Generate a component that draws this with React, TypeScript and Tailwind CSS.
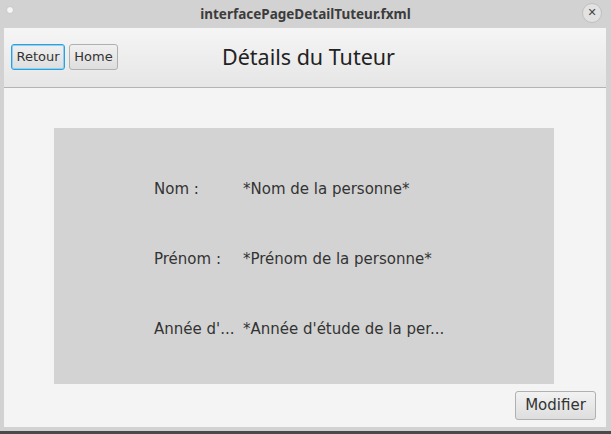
export default function App() {
  // libellés tels qu'affichés (coupés par JavaFX)
  const rows = [
    { label: "Nom :", value: "*Nom de la personne*" },
    { label: "Prénom :", value: "*Prénom de la personne*" },
    { label: "Année d'...", value: "*Année d'étude de la per..." },
  ];

  return (
    <div
      className="w-[611px] h-[434px] bg-[#d2d2d2] flex flex-col overflow-hidden text-[#333]"
      style={{ fontFamily: '"DejaVu Sans", sans-serif' }}
    >
      {/* Title bar */}
      <div className="h-[28px] shrink-0 flex justify-between pl-[6px] pr-[9px] relative">
        <div className="w-[8px] h-[8px] mt-[6px] rounded-full bg-[#f6f6f6] border border-[#c8c8c8]" />
        <span
          className="absolute left-0 right-0 top-[4px] text-center text-[13.5px] font-bold text-[#3c3c3c]"
          style={{ fontFamily: '"Noto Sans", sans-serif' }}
        >
          interfacePageDetailTuteur.fxml
        </span>
        <div className="w-[20px] h-[20px] mt-[3px] rounded-full bg-[#e2e2e2] border border-[#c0c0c0] flex items-center justify-center text-[11px] text-[#444]">
          ✕
        </div>
      </div>

      {/* Window content */}
      <div className="flex-1 flex ml-[4px] mr-[5px] mb-[4px] bg-[#f4f4f4] flex-col">
        {/* Header */}
        <div className="h-[60px] shrink-0 flex items-center px-[7px] relative bg-gradient-to-b from-[#f5f5f5] to-[#e6e6e6] border-b border-[#b4b4b4]">
          <div className="flex gap-[4px] z-10 mb-[1px]">
            <button className="h-[26px] w-[54px] text-[13px] rounded-[3px] bg-gradient-to-b from-[#f0f0f0] to-[#dedede] border border-[#2ba0dc] shadow-[0_0_0_1px_#8fd0f0_inset]">
              Retour
            </button>
            <button className="h-[26px] w-[49px] text-[13px] rounded-[3px] bg-gradient-to-b from-[#f0f0f0] to-[#dedede] border border-[#b0b0b0]">
              Home
            </button>
          </div>
          <div
            className="absolute left-[7px] right-0 text-center text-[21.5px] text-[#222]"
            style={{ fontFamily: '"Noto Sans", sans-serif' }}
          >
            Détails du Tuteur
          </div>
        </div>

        {/* Body */}
        <div className="flex-1 flex flex-col">
          <div className="mt-[40px] ml-[50px] w-[500px] h-[256px] bg-[#d3d3d3] flex flex-col pt-[52px] pl-[100px] gap-[51px]">
            {rows.map((r) => (
              <div key={r.label} className="flex text-[15px] h-[19px] items-center">
                <span className="w-[89px] whitespace-nowrap">{r.label}</span>
                <span className="whitespace-nowrap">{r.value}</span>
              </div>
            ))}
          </div>
          <div className="flex justify-end mt-[7px] mr-[10px]">
            <button className="h-[29px] w-[81px] text-[15px] rounded-[3px] bg-gradient-to-b from-[#f2f2f2] to-[#dedede] border border-[#b0b0b0]">
              Modifier
            </button>
          </div>
        </div>
      </div>
      <div className="h-[3px] bg-[#4a4a4a] shrink-0" />
    </div>
  );
}
